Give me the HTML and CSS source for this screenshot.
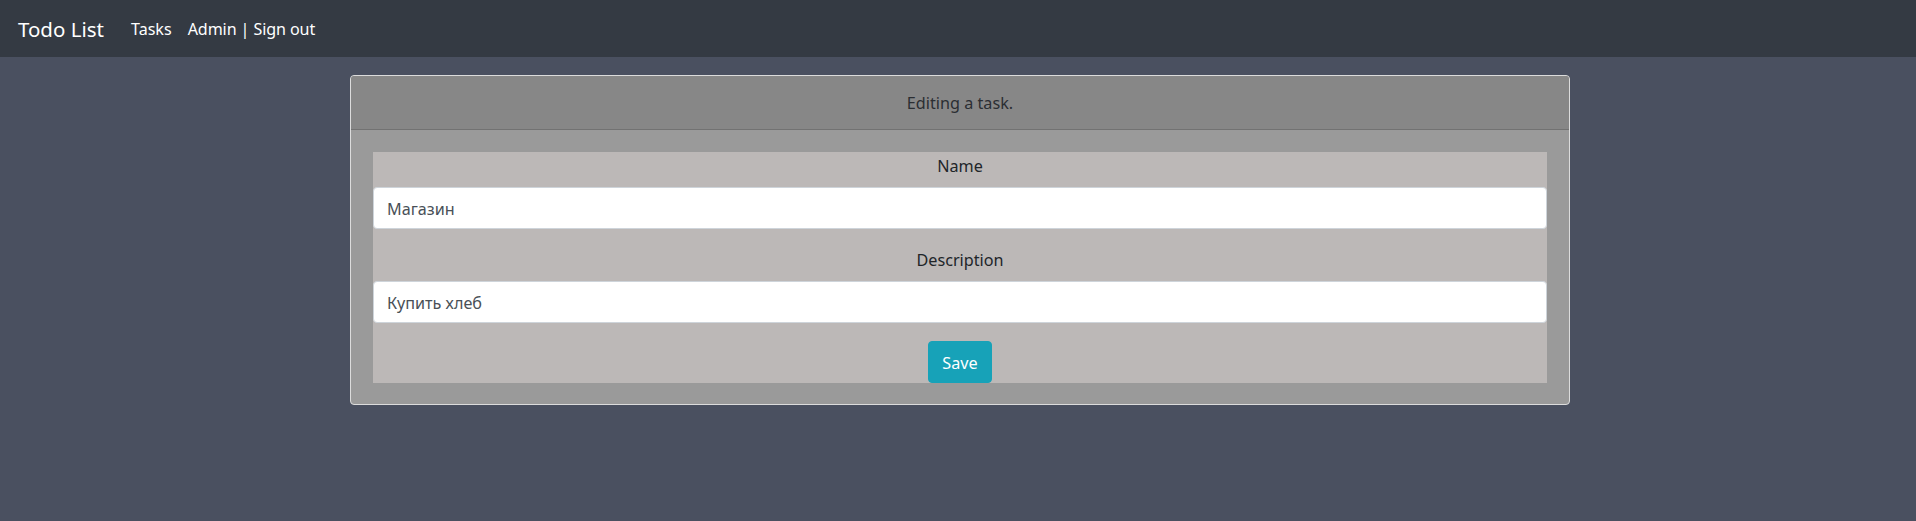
FILE: index.html
```html
<!DOCTYPE html>
<html lang="en">
<head>
<meta charset="utf-8">
<title>Todo List</title>
<link rel="stylesheet" href="styles.css">
</head>
<body>
<nav class="navbar">
  <a class="brand" href="#">Todo List</a>
  <div class="nav-links">
    <a class="nav-link" href="#">Tasks</a>
    <span class="nav-user"><a class="nav-link" href="#">Admin</a> | <a class="nav-link" href="#">Sign out</a></span>
  </div>
</nav>
<main class="page">
  <div class="card">
    <div class="card-header">Editing a task.</div>
    <div class="card-body">
      <form class="task-form">
        <div class="form-group">
          <label class="form-label" for="name">Name</label>
          <input class="form-control" id="name" type="text" value="Магазин">
        </div>
        <div class="form-group">
          <label class="form-label" for="desc">Description</label>
          <input class="form-control" id="desc" type="text" value="Купить хлеб">
        </div>
        <button class="btn-save" type="button">Save</button>
      </form>
    </div>
  </div>
</main>
</body>
</html>
```

FILE: styles.css
```css
* { box-sizing: border-box; }
html, body { margin: 0; padding: 0; }
body {
  background: #4a5060;
  font-family: "Segoe UI", "Noto Sans", "Open Sans", sans-serif;
  font-size: 16.2px;
  line-height: 1.5;
  color: #212529;
}
a { text-decoration: none; color: inherit; }

.navbar {
  height: 57px;
  background: #343a43;
  display: flex;
  align-items: center;
  padding: 0 18px;
  color: #fff;
}
.brand {
  font-size: 20.5px;
  margin-right: 27px;
  padding-top: 1px;
}
.nav-links {
  display: flex;
  gap: 16px;
  font-size: 16.1px;
  padding-top: 1px;
}
.nav-user {
  letter-spacing: -0.1px;
}

.page {
  padding-top: 18px;
}
.card {
  width: 1220px;
  margin-left: 350px;
  border: 1px solid #dcdcdc;
  border-radius: 4px;
  background: #9a9a9a;
  overflow: hidden;
}
.card-header {
  background: #878787;
  border-bottom: 1px solid #727272;
  text-align: center;
  height: 54px;
  display: flex;
  align-items: center;
  justify-content: center;
  padding-top: 2px;
  color: #2b2e33;
}
.card-body {
  padding: 22px 22px 21px;
}
.task-form {
  background: #bcb8b7;
  text-align: center;
  display: flex;
  flex-direction: column;
  align-items: center;
}
.form-group {
  width: 100%;
  margin-bottom: 17.6px;
}
.form-label {
  display: block;
  height: 26.4px;
  line-height: 28.4px;
  margin-bottom: 8.8px;
}
.form-control {
  display: block;
  width: 100%;
  height: 41.5px;
  padding: 2px 13px 0;
  border: 1px solid #ced4da;
  border-radius: 4px;
  background: #fff;
  color: #495057;
  font-family: inherit;
  font-size: 16.2px;
  text-align: left;
  outline: none;
}
.btn-save {
  height: 42px;
  width: 64px;
  background: #17a2b8;
  border: 1px solid #17a2b8;
  border-radius: 4px;
  color: #fff;
  font-family: inherit;
  font-size: 16.2px;
  padding: 2px 0 0;
}
```
